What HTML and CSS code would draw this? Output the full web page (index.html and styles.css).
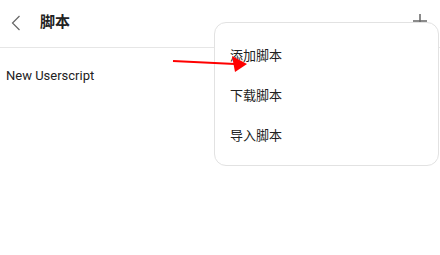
FILE: index.html
```html
<!DOCTYPE html>
<html lang="zh">
<head>
<meta charset="utf-8">
<link rel="stylesheet" href="styles.css">
</head>
<body>
<div class="page">
  <header class="header">
    <svg class="back" width="10" height="16" viewBox="0 0 10 16"><path d="M8.5 1 L1.5 8 L8.5 15" fill="none" stroke="#666" stroke-width="1.2"/></svg>
    <h1 class="title">脚本</h1>
    <svg class="plus" width="16" height="16" viewBox="0 0 16 16"><path d="M8 1 V15 M1 8 H15" fill="none" stroke="#666" stroke-width="1.5"/></svg>
  </header>
  <main class="list">
    <div class="row">New Userscript</div>
  </main>
  <div class="menu">
    <div class="item">添加脚本</div>
    <div class="item">下载脚本</div>
    <div class="item">导入脚本</div>
  </div>
  <svg class="arrow" width="90" height="30" viewBox="0 0 90 30"><path d="M2 8 L64 11" stroke="#f00" stroke-width="2" fill="none"/><path d="M61 3 L76 11 L64 19 Z" fill="#f00"/></svg>
</div>
</body>
</html>
```
FILE: styles.css
```css
html, body { margin: 0; padding: 0; background: #fff; }
body { font-family: Roboto, "Noto Sans CJK SC", sans-serif; color: #222; width: 440px; height: 255px; overflow: hidden; }
.page { position: relative; width: 440px; height: 255px; }
.header { border-bottom: 1px solid #e6e6e6; display: flex; align-items: center; padding: 0 12px 0 11px; box-sizing: border-box; height: 48px; }
.back { display: block; margin-top: -2px; }
.title { margin: 0 0 0 19px; font-size: 15px; font-weight: bold; color: #222; line-height: 20px; flex: 1; margin-top: -4px; }
.plus { display: block; margin-top: -6px; }
.list { padding: 0 6px; }
.row { font-size: 13px; height: 56px; line-height: 56px; color: #222; }
.menu { position: absolute; left: 214px; top: 22px; width: 225px; height: 144px; box-sizing: border-box; border: 1px solid #e2e2e2; border-radius: 12px; background: #fff; padding: 13px 0 0 15px; }
.item { font-size: 13px; height: 40px; line-height: 40px; color: #222; }
.arrow { position: absolute; left: 171px; top: 53px; }
```
